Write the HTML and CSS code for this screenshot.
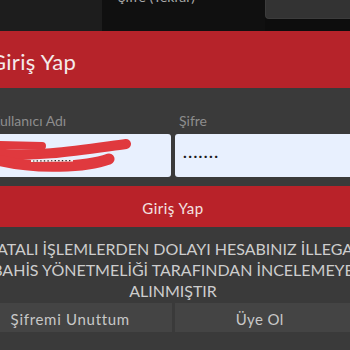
FILE: index.html
```html
<!DOCTYPE html>
<html lang="tr">
<head>
    <meta charset="UTF-8">
    <meta name="viewport" content="width=device-width, initial-scale=1.0">
    <title>Giriş Yap</title>
    <link rel="stylesheet" href="styles.css">
</head>
<body>
    <div class="page">
        <div class="prev-row">
            <div class="prev-side"></div>
            <div class="prev-label">Şifre (Tekrar)</div>
            <div class="prev-field"><div class="prev-input"></div></div>
        </div>

        <div class="login">
            <div class="login-head">
                <h2>Giriş Yap</h2>
            </div>
            <div class="login-body">
                <div class="fields">
                    <div class="field">
                        <label>Kullanıcı Adı</label>
                        <div class="input user">
                            <svg class="scribble" viewBox="0 0 184 43" width="184" height="43">
                                <path d="M8 11 L55 12" stroke="#e0393e" stroke-width="8" stroke-linecap="round" fill="none"/>
                                <path d="M4 19 C50 24, 95 16, 139 10" stroke="#e0393e" stroke-width="10" stroke-linecap="round" fill="none"/>
                                <path d="M10 26 C50 36, 100 33, 122 25" stroke="#e0393e" stroke-width="11" stroke-linecap="round" fill="none"/>
                                <path d="M44 27 L86 26.5" stroke="#f6eeee" stroke-width="2" fill="none"/>
                                <path d="M46 27 L84 26.5" stroke="#2a2a2a" stroke-width="1.2" stroke-dasharray="1.4 2.2" fill="none"/>
                            </svg>
                        </div>
                    </div>
                    <div class="field">
                        <label>Şifre</label>
                        <div class="input"><span class="dots">.......</span></div>
                    </div>
                </div>

                <button class="submit">Giriş Yap</button>

                <p class="warning">HATALI İŞLEMLERDEN DOLAYI HESABINIZ İLLEGAL<br>BAHİS YÖNETMELİĞİ TARAFINDAN İNCELEMEYE<br>ALINMIŞTIR</p>

                <div class="links">
                    <a class="link forgot">Şifremi Unuttum</a>
                    <a class="link">Üye Ol</a>
                </div>
            </div>
        </div>
    </div>
</body>
</html>
```

FILE: styles.css
```css
body {
    margin: 0;
    background-color: #3a3a3a;
    font-family: Lato, "Open Sans", sans-serif;
    overflow: hidden;
}

.page {
    margin-left: -13px;
    width: 372px;
}

/* leftover of the register form above */
.prev-row {
    display: grid;
    grid-template-columns: 115px 163px 1fr;
    height: 31px;
    background-color: #0d0d0d;
}

.prev-side {
    background-color: #1d1d1d;
}

.prev-label {
    margin-top: -12px;
    padding-left: 16px;
    color: #a9a9a9;
    font-size: 14px;
    line-height: 18px;
    background-color: #101010;
}

.prev-input {
    height: 19px;
    background-color: #333333;
    border-left: 1px solid #3c3c3c;
    border-bottom: 1px solid #3c3c3c;
    border-bottom-left-radius: 4px;
    box-sizing: border-box;
}

.login-head {
    background-color: #b6232a;
    height: 57px;
    padding: 18px 0 0 3px;
    box-sizing: border-box;
}

.login-head h2 {
    margin: 0;
    color: #f4eaea;
    font-size: 22px;
    font-weight: 400;
    line-height: 26px;
    letter-spacing: 0.3px;
}

.login-body {
    padding-top: 24px;
}

.fields {
    display: grid;
    grid-template-columns: 1fr 1fr;
    gap: 4px;
}

.field label {
    display: block;
    color: #8d8d8d;
    font-size: 14px;
    line-height: 18px;
    margin-bottom: 4px;
    padding-left: 4px;
}

.input {
    position: relative;
    height: 43px;
    background-color: #e8f0fe;
    border-radius: 3px;
    display: flex;
    align-items: center;
    padding-left: 8px;
    box-sizing: border-box;
}

.dots {
    font-size: 16px;
    font-weight: 700;
    letter-spacing: 1.4px;
    color: #1a1a1a;
    margin-top: -8px;
}

.scribble {
    position: absolute;
    left: 0;
    top: 0;
}

.submit {
    display: block;
    width: 100%;
    height: 41px;
    margin-top: 9px;
    border: none;
    background-color: #b92229;
    color: #f3e2e2;
    font-family: inherit;
    font-size: 15px;
    letter-spacing: 0.5px;
    padding: 2px 0 0 0;
}

.warning {
    margin: 11px -30px 0;
    text-align: center;
    white-space: nowrap;
    color: #cdcdcd;
    font-size: 16px;
    line-height: 21px;
    height: 65px;
}

.links {
    display: grid;
    grid-template-columns: 1fr 1fr;
    gap: 3px;
}

.link {
    height: 29px;
    display: flex;
    align-items: center;
    justify-content: center;
    background-color: #444444;
    color: #c8c8c8;
    font-size: 15px;
    letter-spacing: 0.4px;
    padding: 3px 14px 0 0;
    box-sizing: border-box;
}

.forgot {
    letter-spacing: 0.7px;
    padding-right: 18px;
}
```
